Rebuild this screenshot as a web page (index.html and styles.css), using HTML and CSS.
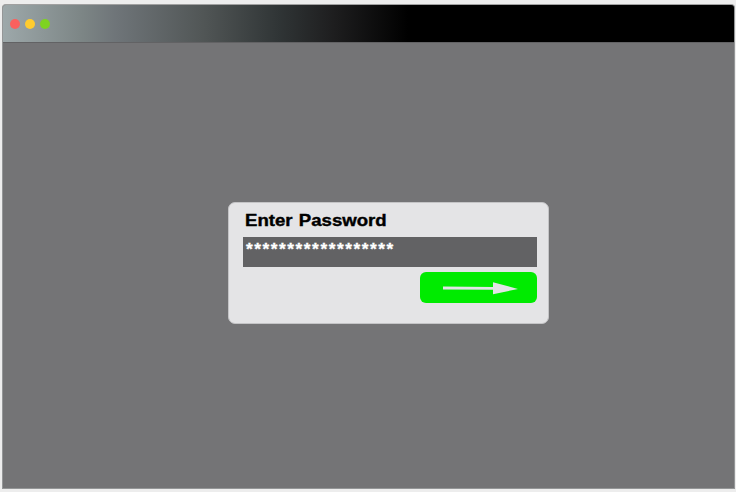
FILE: index.html
```html
<!DOCTYPE html>
<html lang="en">
<head>
<meta charset="utf-8">
<title>Enter Password</title>
<link rel="stylesheet" href="styles.css">
</head>
<body>
<main class="window">
  <header class="titlebar">
    <span class="dot red"></span>
    <span class="dot yellow"></span>
    <span class="dot green"></span>
  </header>
  <section class="content">
    <form class="dialog">
      <h1 class="title"><span class="wide">Enter Password</span></h1>
      <div class="field"><span class="stars">******************</span></div>
      <button class="submit" type="button" aria-label="Submit">
        <svg width="117" height="31" viewBox="0 0 117 31"><path d="M23 14.6L73 15V10.2L98 17L73 22.2V17.7L23 17.4Z" fill="#e4e4e6"/></svg>
      </button>
    </form>
  </section>
</main>
</body>
</html>
```
FILE: styles.css
```css
* { box-sizing: border-box; }
body {
  margin: 0;
  height: 492px;
  padding: 4px 1px 3px 2px;
  background: #ededed;
  font-family: "Liberation Sans", Arial, sans-serif;
  overflow: hidden;
}
.window {
  height: 485px;
  display: flex;
  flex-direction: column;
  border: 1px solid #949697;
  border-top-color: #a0a0a0;
  border-radius: 4px 4px 0 0;
  overflow: hidden;
  background: #747476;
}
.titlebar {
  flex: none;
  height: 37px;
  display: flex;
  align-items: center;
  gap: 5px;
  padding-left: 7px;
  background: linear-gradient(90deg, #9da8aa 0, #7c8585 80px, #6f7579 112px, #515656 200px, #303536 275px, #1e1e1f 330px, #000 405px);
}
.dot { width: 10px; height: 10px; border-radius: 50%; }
.red { background: #fa615e; }
.yellow { background: #ffcc2e; }
.green { background: #7ed321; }
.content {
  flex: 1;
  padding: 159px 0 0 225px;
  border-top: 1px solid #626264;
}
.dialog {
  width: 321px;
  height: 122px;
  padding: 7px 11px 0 14px;
  border: 1px solid #c4c4c6;
  border-radius: 7px;
  background: #e4e4e6;
  display: flex;
  flex-direction: column;
}
.title {
  margin: 0;
  height: 27px;
  padding-left: 1.5px;
  font-size: 16.5px;
  line-height: 21px;
  color: #000;
}
.wide {
  display: inline-block;
  word-spacing: 1px;
  transform: scaleX(1.127);
  transform-origin: 0 0;
  -webkit-text-stroke: 0.4px #000;
}
.field {
  flex: none;
  height: 30px;
  padding-left: 3px;
  background: #626264;
  color: #fff;
  font-size: 16.5px;
  font-weight: bold;
  line-height: 24px;
}
.stars {
  display: inline-block;
  letter-spacing: 1.45px;
  transform: scaleX(1.05);
  transform-origin: 0 0;
  -webkit-text-stroke: 0.3px #fff;
}
.submit {
  align-self: flex-end;
  width: 117px;
  height: 31px;
  margin: 5px 0 0;
  padding: 0;
  border: 0;
  border-radius: 6px;
  background: #00eb00;
}
.submit svg { display: block; }
```
